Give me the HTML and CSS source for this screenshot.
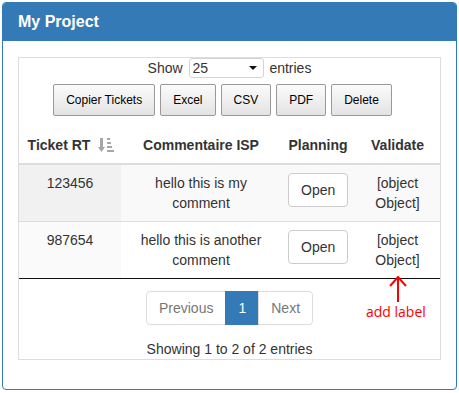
FILE: index.html
```html
<!DOCTYPE html>
<html lang="en">
<head>
    <meta charset="UTF-8">
    <meta name="viewport" content="width=device-width, initial-scale=1.0">
    <title>My Project</title>
    <link rel="stylesheet" href="styles.css">
</head>
<body>
    <div class="panel">
        <div class="panel-heading">
            <h3 class="panel-title">My Project</h3>
        </div>
        <div class="panel-body">
            <div class="table-box">
                <div class="length-row">
                    <label>Show
                        <span class="select-wrap">
                            <select>
                                <option>10</option>
                                <option selected>25</option>
                                <option>50</option>
                                <option>100</option>
                            </select>
                        </span>
                        entries</label>
                </div>

                <div class="dt-buttons">
                    <button class="dt-button">Copier Tickets</button>
                    <button class="dt-button">Excel</button>
                    <button class="dt-button">CSV</button>
                    <button class="dt-button">PDF</button>
                    <button class="dt-button">Delete</button>
                </div>

                <table class="data-table">
                    <colgroup>
                        <col class="col-ticket">
                        <col class="col-comment">
                        <col class="col-planning">
                        <col class="col-validate">
                    </colgroup>
                    <thead>
                        <tr>
                            <th class="sorting-asc">Ticket RT
                                <svg class="sort-icon" width="16" height="15" viewBox="0 0 16 15">
                                    <rect x="2" y="0" width="3" height="10" fill="#a6a6a6"/>
                                    <polygon points="0,9 7,9 3.5,14" fill="#a6a6a6"/>
                                    <rect x="9" y="0" width="3" height="2" fill="#a6a6a6"/>
                                    <rect x="9" y="4" width="4" height="2" fill="#a6a6a6"/>
                                    <rect x="9" y="8" width="5" height="2" fill="#a6a6a6"/>
                                    <rect x="9" y="12" width="7" height="2" fill="#a6a6a6"/>
                                </svg>
                            </th>
                            <th>Commentaire ISP</th>
                            <th>Planning</th>
                            <th>Validate</th>
                        </tr>
                    </thead>
                    <tbody>
                        <tr class="odd">
                            <td class="sorted">123456</td>
                            <td>hello this is my comment</td>
                            <td><button class="btn">Open</button></td>
                            <td>[object Object]</td>
                        </tr>
                        <tr class="even">
                            <td class="sorted">987654</td>
                            <td>hello this is another comment</td>
                            <td><button class="btn">Open</button></td>
                            <td>[object Object]</td>
                        </tr>
                    </tbody>
                </table>

                <ul class="pagination">
                    <li class="disabled"><a>Previous</a></li>
                    <li class="active"><a>1</a></li>
                    <li class="disabled"><a>Next</a></li>
                </ul>

                <div class="info">Showing 1 to 2 of 2 entries</div>
            </div>
        </div>
    </div>

    <div class="note">
        <svg class="note-arrow" width="20" height="28" viewBox="0 0 20 28">
            <path d="M10 1 L10 26 M2 10 L10 1 L18 10" fill="none" stroke="#ff0000" stroke-width="2"/>
        </svg>
        <span class="note-text">add label</span>
    </div>
</body>
</html>
```

FILE: styles.css
```css
* {
    box-sizing: border-box;
}
body {
    margin: 0;
    padding: 2px;
    position: relative;
    font-family: 'Liberation Sans', Arial, sans-serif;
    font-size: 14px;
    line-height: 20px;
    color: #333;
    background: #fff;
}
.panel {
    width: 455px;
    border: 1px solid #337ab7;
    border-radius: 4px;
    background: #fff;
}
.panel-heading {
    background-color: #337ab7;
    color: #fff;
    padding: 10px 15px;
    border-radius: 3px 3px 0 0;
}
.panel-title {
    margin: 0;
    font-size: 16px;
    line-height: 18px;
    font-weight: bold;
}
.panel-body {
    padding: 16px 15px 29px;
}
.table-box {
    border: 1px solid #ddd;
}
.length-row {
    text-align: center;
    height: 20px;
}
.select-wrap {
    position: relative;
    display: inline-block;
    vertical-align: top;
    margin: 0 2px;
}
.select-wrap select {
    appearance: none;
    -webkit-appearance: none;
    width: 75px;
    height: 20px;
    padding: 0 0 0 3px;
    border: 1px solid #d4d4d4;
    border-radius: 3px;
    background: #fff;
    font-family: inherit;
    font-size: 14px;
    color: #333;
}
.select-wrap::after {
    content: '';
    position: absolute;
    right: 7px;
    top: 8px;
    border-left: 4px solid transparent;
    border-right: 4px solid transparent;
    border-top: 4px solid #111;
}
.dt-buttons {
    display: flex;
    justify-content: center;
    gap: 5px;
    margin-top: 6px;
    padding-right: 14px;
}
.dt-button {
    height: 32px;
    padding: 6px 12px;
    border: 1px solid #999;
    border-radius: 2px;
    background: linear-gradient(to bottom, #fbfbfb 0%, #e3e3e3 100%);
    font-family: inherit;
    font-size: 12px;
    line-height: 18px;
    color: #000;
    cursor: pointer;
}
.dt-button:hover {
    background: linear-gradient(to bottom, #f3f3f3 0%, #d6d6d6 100%);
}
.data-table {
    width: 100%;
    margin-top: 11px;
    border-collapse: collapse;
    table-layout: fixed;
    border-bottom: 1px solid #111;
}
.col-ticket {
    width: 102px;
}
.col-comment {
    width: 160px;
}
.col-planning {
    width: 74px;
}
.data-table th,
.data-table td {
    padding: 8px 7px;
    text-align: center;
    vertical-align: top;
}
.data-table th {
    font-weight: bold;
    vertical-align: bottom;
    white-space: nowrap;
    border-bottom: 2px solid #ddd;
}
.data-table td {
    border-top: 1px solid #ddd;
}
.data-table th.sorting-asc {
    position: relative;
    padding: 8px 30px 8px 8px;
}
.sort-icon {
    position: absolute;
    right: 7px;
    top: 11px;
}
.data-table tr.odd td {
    background-color: #f9f9f9;
}
.data-table tr.odd td.sorted {
    background-color: #f1f1f1;
}
.data-table tr.even td.sorted {
    background-color: #fafafa;
}
.btn {
    height: 34px;
    padding: 6px 12px;
    border: 1px solid #ccc;
    border-radius: 4px;
    background: #fff;
    font-family: inherit;
    font-size: 14px;
    line-height: 20px;
    color: #333;
    cursor: pointer;
}
.pagination {
    display: flex;
    justify-content: center;
    list-style: none;
    margin: 12px 0 0;
    padding: 0;
}
.pagination li a {
    display: block;
    padding: 6px 12px;
    line-height: 20px;
    border: 1px solid #ddd;
    margin-left: -1px;
    background: #fff;
    color: #337ab7;
}
.pagination li:first-child a {
    margin-left: 0;
    border-radius: 4px 0 0 4px;
}
.pagination li:last-child a {
    border-radius: 0 4px 4px 0;
}
.pagination li.disabled a {
    color: #777;
}
.pagination li.active a {
    background-color: #337ab7;
    border-color: #337ab7;
    color: #fff;
}
.info {
    text-align: center;
    padding-top: 14px;
}
.note {
    position: absolute;
    left: 366px;
    top: 276px;
    width: 70px;
    color: #ff0000;
}
.note-arrow {
    display: block;
    margin-left: 22px;
}
.note-text {
    display: block;
    font-family: 'Open Sans', sans-serif;
    font-size: 14px;
    line-height: 16px;
}
```
